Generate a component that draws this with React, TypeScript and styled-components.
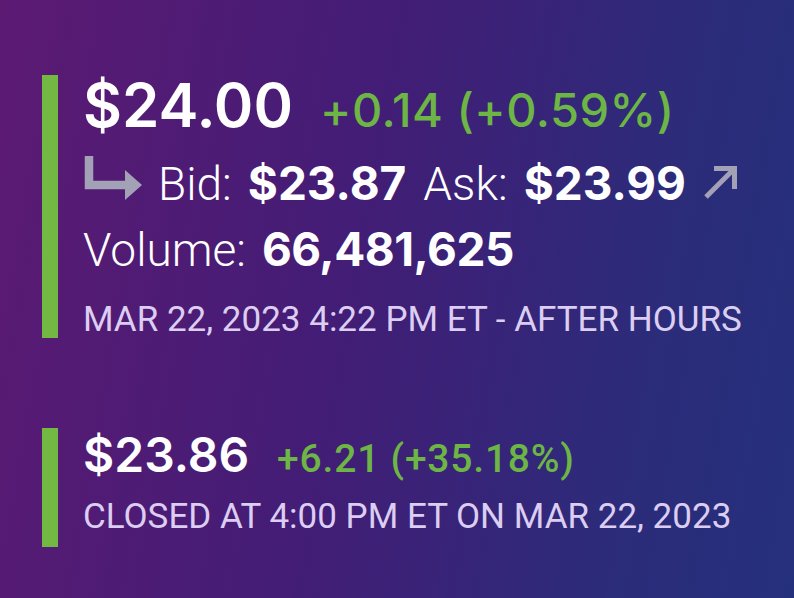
import styled, { createGlobalStyle } from 'styled-components';

const GREEN = '#6db545';
const LAVENDER = '#dccdf2';
const ARROW_GREY = '#a3a1b6';

const Global = createGlobalStyle`
	html, body {
		margin: 0;
		padding: 0;
	}
	body {
		width: 794px;
		height: 598px;
		overflow: hidden;
		background: linear-gradient(100deg, #5c1a73 0%, #421d76 45%, #2b2c7a 80%, #25307c 100%);
		font-family: 'Roboto', 'Liberation Sans', sans-serif;
		color: #ffffff;
	}
`;

const Page = styled.div`
	width: 794px;
	height: 598px;
	box-sizing: border-box;
	padding: 75px 0 0 42px;
	display: flex;
	flex-direction: column;
	gap: 90px;
`;

const Block = styled.section`
	display: flex;
	align-items: stretch;
`;

const Bar = styled.div`
	width: 16px;
	flex-shrink: 0;
	background: #72b843;
`;

const Content = styled.div`
	padding-left: 25px;
	display: flex;
	flex-direction: column;
`;

const Row = styled.div<{ $h: number; $pt?: number }>`
	box-sizing: border-box;
	height: ${(p) => p.$h}px;
	padding-top: ${(p) => p.$pt ?? 0}px;
	display: flex;
	align-items: baseline;
	white-space: nowrap;
`;

const Price = styled.span<{ $size: number }>`
	font-family: 'Inter', sans-serif;
	font-weight: 600;
	font-size: ${(p) => p.$size}px;
	line-height: 1;
`;

const Change = styled.span<{ $size: number; $gap: number; $roboto?: boolean }>`
	font-family: ${(p) => (p.$roboto ? "'Roboto', sans-serif" : "'Inter', sans-serif")};
	font-weight: 500;
	font-size: ${(p) => p.$size}px;
	line-height: 1;
	letter-spacing: ${(p) => (p.$roboto ? 0.8 : 0.5)}px;
	color: ${GREEN};
	margin-left: ${(p) => p.$gap}px;
`;

const Label = styled.span`
	font-family: 'Roboto', sans-serif;
	font-weight: 300;
	font-size: 46px;
	line-height: 1;
	margin-right: 16px;
`;

const Value = styled.span<{ $ls?: number }>`
	font-family: 'Inter', sans-serif;
	font-weight: 700;
	font-size: 46px;
	line-height: 1;
	letter-spacing: ${(p) => p.$ls ?? 0}px;
	margin-right: 17px;
`;

const Stamp = styled.div`
	font-family: 'Roboto', sans-serif;
	font-weight: 400;
	font-size: 35px;
	line-height: 1;
	color: ${LAVENDER};
	white-space: nowrap;
`;

const CornerIcon = styled.svg`
	flex-shrink: 0;
	margin: 0 15px -6px 0;
`;

const UpIcon = styled.svg`
	flex-shrink: 0;
`;

const CornerArrow = () => (
	<CornerIcon width="60" height="44" viewBox="0 0 60 44">
		<path d="M6 0 V29 H44" fill="none" stroke={ARROW_GREY} strokeWidth="8.5" />
		<path d="M42 14 L59 29 L42 44 Z" fill={ARROW_GREY} />
	</CornerIcon>
);

const UpArrow = () => (
	<UpIcon width="36" height="36" viewBox="0 0 36 36">
		<path d="M3 33 L31 5" fill="none" stroke={ARROW_GREY} strokeWidth="5" />
		<path d="M11 4.5 H31.5 V25" fill="none" stroke={ARROW_GREY} strokeWidth="5" />
	</UpIcon>
);

const App = () => {
	return (
		<>
			<Global />
			<Page>
				<Block>
					<Bar />
					<Content>
						<Row $h={70}>
							<Price $size={60}>$24.00</Price>
							<Change $size={47} $gap={27}>+0.14 (+0.59%)</Change>
						</Row>
						<Row $h={70} $pt={11}>
							<CornerArrow />
							<Label>Bid:</Label>
							<Value>$23.87</Value>
							<Label>Ask:</Label>
							<Value>$23.99</Value>
							<UpArrow />
						</Row>
						<Row $h={70} $pt={11}>
							<Label>Volume:</Label>
							<Value $ls={-0.5}>66,481,625</Value>
						</Row>
						<Row $h={53} $pt={17}>
							<Stamp>MAR 22, 2023 4:22 PM ET - AFTER HOURS</Stamp>
						</Row>
					</Content>
				</Block>
				<Block>
					<Bar />
					<Content>
						<Row $h={62} $pt={3}>
							<Price $size={48}>$23.86</Price>
							<Change $size={39} $gap={28} $roboto>+6.21 (+35.18%)</Change>
						</Row>
						<Row $h={57} $pt={9}>
							<Stamp>CLOSED AT 4:00 PM ET ON MAR 22, 2023</Stamp>
						</Row>
					</Content>
				</Block>
			</Page>
		</>
	);
};

export default App;
